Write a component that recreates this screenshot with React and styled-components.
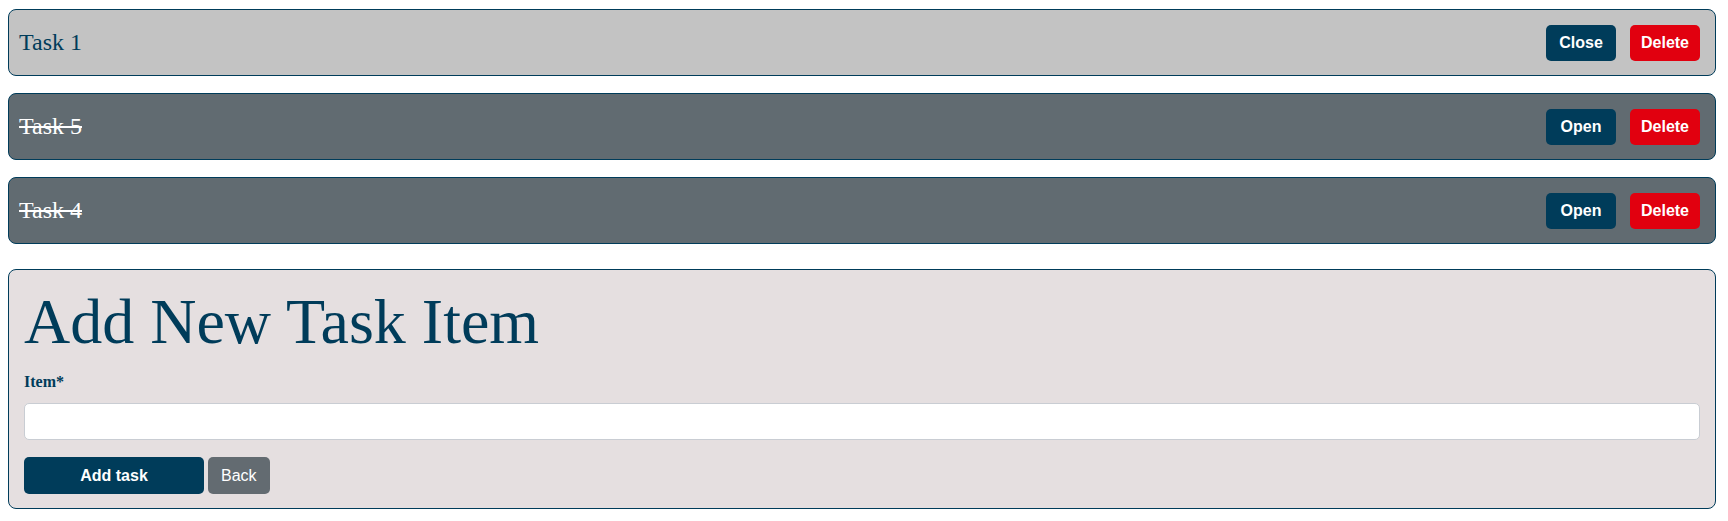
import React from "react";
import styled, { createGlobalStyle } from "styled-components";

const Global = createGlobalStyle`
  body {
    margin: 8px;
    background: #ffffff;
    font-family: "Liberation Serif", "Times New Roman", serif;
  }
  * { box-sizing: border-box; }
`;

const NAVY = "#003c5a";

const List = styled.div`
  display: flex;
  flex-direction: column;
  gap: 16px;
  margin-right: 4px;
`;

const TaskCard = styled.div`
  display: flex;
  align-items: center;
  justify-content: space-between;
  height: 67px;
  margin-top: 1px;
  padding: 0 15px 0 10px;
  border: 1px solid ${NAVY};
  border-radius: 8px;
  background: ${(p) => (p.$done ? "#616b71" : "#c3c3c3")};
`;

const TaskTitle = styled.span`
  font-family: "Liberation Serif", "Times New Roman", serif;
  font-size: 24px;
  color: ${(p) => (p.$done ? "#ffffff" : NAVY)};
  text-decoration: ${(p) => (p.$done ? "line-through" : "none")};
`;

const Actions = styled.div`
  display: flex;
  gap: 14px;
`;

const SmallButton = styled.button`
  width: 70px;
  height: 36px;
  border: none;
  border-radius: 5px;
  background: ${(p) => (p.$danger ? "#e1000f" : NAVY)};
  color: #ffffff;
  font-family: "Liberation Sans", Arial, sans-serif;
  font-weight: 700;
  font-size: 16px;
  padding: 0;
`;

const FormCard = styled.form`
  margin: 25px 4px 0 0;
  padding: 16px 15px 14px 15px;
  border: 1px solid ${NAVY};
  border-radius: 8px;
  background: #e5dfe0;
`;

const Heading = styled.h1`
  margin: 0;
  font-family: "Liberation Serif", "Times New Roman", serif;
  font-weight: 400;
  font-size: 64px;
  color: ${NAVY};
  line-height: 71px;
`;

const Label = styled.label`
  display: block;
  margin-top: 16px;
  font-family: "Liberation Serif", "Times New Roman", serif;
  font-weight: 700;
  font-size: 16px;
  line-height: 18px;
  color: ${NAVY};
`;

const Input = styled.input`
  display: block;
  width: 100%;
  height: 37px;
  margin-top: 12px;
  border: 1px solid #c9cdd3;
  border-radius: 5px;
  background: #ffffff;
  outline: none;
`;

const ButtonRow = styled.div`
  display: flex;
  gap: 4px;
  margin-top: 17px;
`;

const FormButton = styled.button`
  height: 37px;
  width: ${(p) => (p.$primary ? "180px" : "auto")};
  padding: 0 13px;
  border: none;
  border-radius: 5px;
  background: ${(p) => (p.$primary ? NAVY : "#636b71")};
  color: #ffffff;
  font-family: "Liberation Sans", Arial, sans-serif;
  font-weight: ${(p) => (p.$primary ? 700 : 400)};
  font-size: 16px;
`;

const tasks = [
  { id: 1, title: "Task 1", done: false },
  { id: 5, title: "Task 5", done: true },
  { id: 4, title: "Task 4", done: true },
];

export default function App() {
  return (
    <>
      <Global />
      <List>
        {tasks.map((t) => (
          <TaskCard key={t.id} $done={t.done}>
            <TaskTitle $done={t.done}>{t.title}</TaskTitle>
            <Actions>
              <SmallButton>{t.done ? "Open" : "Close"}</SmallButton>
              <SmallButton $danger>Delete</SmallButton>
            </Actions>
          </TaskCard>
        ))}
      </List>
      <FormCard onSubmit={(e) => e.preventDefault()}>
        <Heading>Add New Task Item</Heading>
        <Label htmlFor="item">Item*</Label>
        <Input id="item" type="text" />
        <ButtonRow>
          <FormButton $primary type="submit">Add task</FormButton>
          <FormButton type="button">Back</FormButton>
        </ButtonRow>
      </FormCard>
    </>
  );
}
